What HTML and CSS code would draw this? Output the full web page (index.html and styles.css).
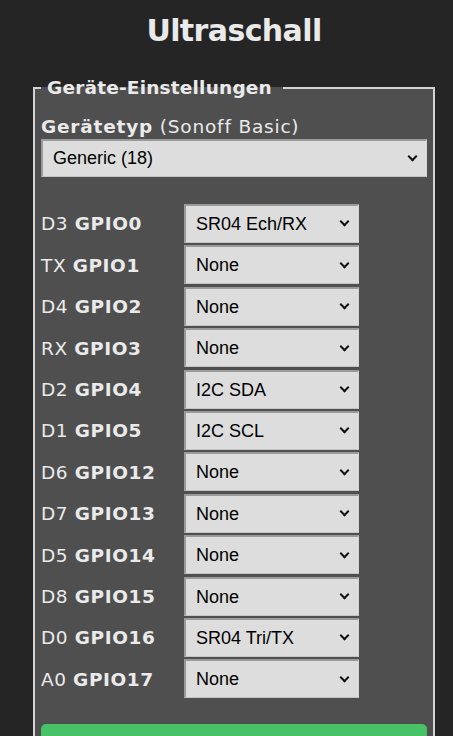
FILE: index.html
```html
<!DOCTYPE html>
<html lang="de">
<head>
    <meta charset="UTF-8">
    <title>Ultraschall - Geräte-Einstellungen</title>
    <link rel="stylesheet" href="styles.css">
</head>
<body>

<main class="page">

    <h1 class="title">Ultraschall</h1>

    <form class="config">
        <fieldset class="box">
            <legend class="box-title">Geräte-Einstellungen</legend>

            <p class="type-label"><b>Gerätetyp</b> (Sonoff Basic)</p>
            <span class="pick pick-wide">
                <select class="field">
                    <option>Generic (18)</option>
                </select>
            </span>

            <div class="pins">
                <label class="pin">D3 <b>GPIO0</b></label>
                <span class="pick"><select class="field"><option>SR04 Ech/RX</option></select></span>

                <label class="pin">TX <b>GPIO1</b></label>
                <span class="pick"><select class="field"><option>None</option></select></span>

                <label class="pin">D4 <b>GPIO2</b></label>
                <span class="pick"><select class="field"><option>None</option></select></span>

                <label class="pin">RX <b>GPIO3</b></label>
                <span class="pick"><select class="field"><option>None</option></select></span>

                <label class="pin">D2 <b>GPIO4</b></label>
                <span class="pick"><select class="field"><option>I2C SDA</option></select></span>

                <label class="pin">D1 <b>GPIO5</b></label>
                <span class="pick"><select class="field"><option>I2C SCL</option></select></span>

                <label class="pin">D6 <b>GPIO12</b></label>
                <span class="pick"><select class="field"><option>None</option></select></span>

                <label class="pin">D7 <b>GPIO13</b></label>
                <span class="pick"><select class="field"><option>None</option></select></span>

                <label class="pin">D5 <b>GPIO14</b></label>
                <span class="pick"><select class="field"><option>None</option></select></span>

                <label class="pin">D8 <b>GPIO15</b></label>
                <span class="pick"><select class="field"><option>None</option></select></span>

                <label class="pin">D0 <b>GPIO16</b></label>
                <span class="pick"><select class="field"><option>SR04 Tri/TX</option></select></span>

                <label class="pin">A0 <b>GPIO17</b></label>
                <span class="pick"><select class="field"><option>None</option></select></span>
            </div>

            <button type="button" class="save">Speichern</button>
        </fieldset>
    </form>

</main>

</body>
</html>
```

FILE: styles.css
```css
html, body {
    margin: 0;
    padding: 0;
}
body {
    background-color: #252525;
    color: #eaeaea;
    font-family: "DejaVu Sans", Verdana, sans-serif;
}

.page {
    width: 402px;
    margin-left: 33px;
}

.title {
    margin: 13px 0 28px;
    font-size: 30px;
    line-height: 36px;
    letter-spacing: -0.6px;
    text-align: center;
}

.config {
    margin: 0;
}

.box {
    margin: 0;
    padding: 0 6px 20px;
    border: 2px solid #d4d4d4;
    background-color: #4f4f4f;
    min-width: 0;
}

.box-title {
    padding: 0 11px 0 6px;
    font-size: 18.5px;
    line-height: 22px;
    font-weight: bold;
    letter-spacing: 0.2px;
}

.type-label {
    margin: 16.6px 0 1.4px;
    font-size: 18.5px;
    line-height: 22px;
    letter-spacing: 0.8px;
}

/* select with its own chevron */
.pick {
    display: block;
    position: relative;
    width: 175px;
}
.pick-wide {
    width: auto;
}
.pick::after {
    content: "";
    position: absolute;
    right: 11px;
    top: 50%;
    width: 5px;
    height: 5px;
    margin-top: -5px;
    border-right: 2px solid #111;
    border-bottom: 2px solid #111;
    transform: rotate(45deg);
    pointer-events: none;
}

.field {
    -webkit-appearance: none;
    appearance: none;
    display: block;
    width: 100%;
    height: 39px;
    margin: 0;
    padding: 0 24px 0 10px;
    border-style: solid;
    border-width: 2px 1px 1px 2px;
    border-color: #9a9a9a #d6d6d6 #c4c4c4 #9a9a9a;
    border-radius: 0;
    background-color: #dddddd;
    color: #000;
    font-family: "Liberation Sans", Tahoma, Arial, sans-serif;
    font-size: 18px;
    outline: none;
}
.pick-wide .field {
    height: 38px;
}

.pins {
    display: grid;
    grid-template-columns: 143px 175px;
    row-gap: 2.4px;
    margin-top: 27px;
    align-items: center;
}

.pin {
    font-size: 18.5px;
    line-height: 22px;
    letter-spacing: 0.6px;
    padding-top: 2px;
}

.save {
    display: block;
    width: 100%;
    height: 60px;
    margin-top: 26px;
    border: 0;
    border-radius: 5px;
    background-color: #47c266;
    color: #fff;
    font-family: "DejaVu Sans", Verdana, sans-serif;
    font-size: 20px;
}
```
